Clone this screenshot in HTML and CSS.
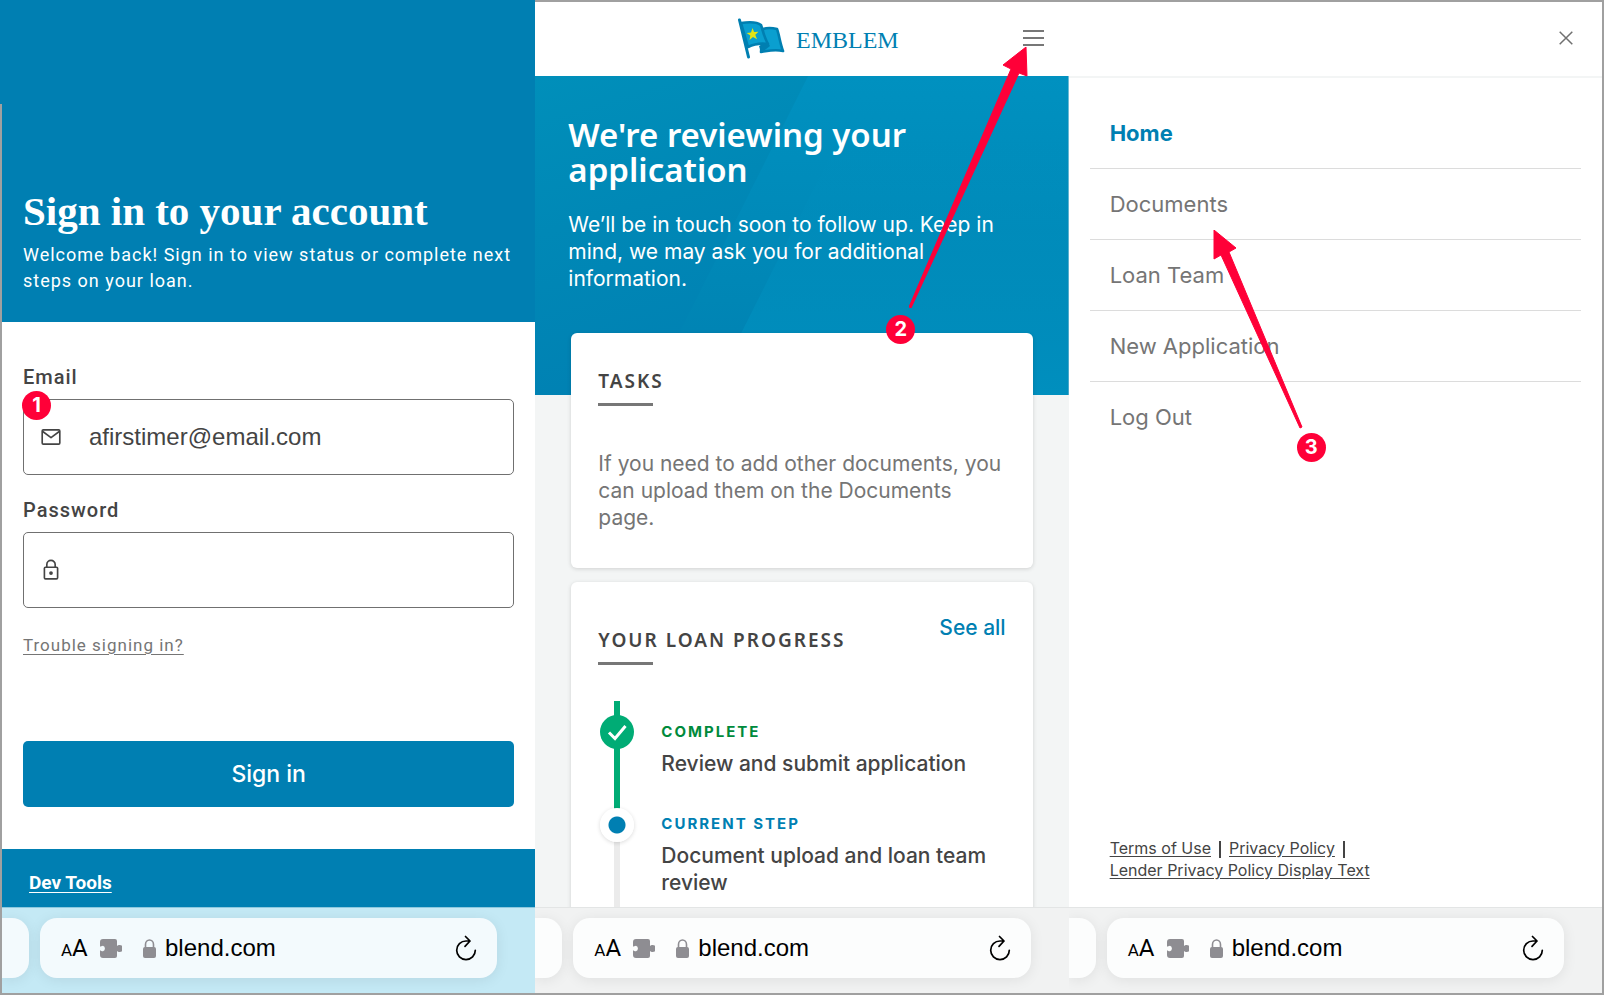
FILE: index.html
```html
<!DOCTYPE html>
<html lang="en">
<head>
  <meta charset="utf-8">
  <title>Borrower sign in steps</title>
  <meta name="viewport" content="width=device-width, initial-scale=1.0">
  <link rel="stylesheet" href="styles.css">
</head>
<body>
  <!-- shared icons -->
  <svg class="sprite" aria-hidden="true">
    <symbol id="puzzle" viewBox="0 0 22 19">
      <path fill="#8e8d92" d="M3 0h12a2 2 0 0 1 2 2v5c1-.6 1.400-1 2.500-1a3 3 0 0 1 0 7c-1.100 0-1.500-.4-2.500-1v5a2 2 0 0 1-2 2H3a3 3 0 0 1-3-3v-4.500c1 0 1.500.8 3 .8a3 3 0 0 0 0-5.600C1.500 6.700 1 7.500 0 7.500V3a3 3 0 0 1 3-3z"/>
    </symbol>
    <symbol id="padlock" viewBox="0 0 13 19">
      <rect x="0" y="8" width="13" height="11" rx="2" fill="#8e8d92"/>
      <path d="M2.500 9V5.500a4 4.500 0 0 1 8 0V9" fill="none" stroke="#8e8d92" stroke-width="1.600"/>
    </symbol>
    <symbol id="reload" viewBox="0 0 22 26">
      <path d="M11 6a9.300 9.300 0 1 0 9.300 9.300M10.500 1.500L15 6l-5 5.300M11 6h4" fill="none" stroke="#000" stroke-width="1.700" stroke-linecap="round" stroke-linejoin="round"/>
    </symbol>
  </svg>

  <div class="steps">

    <!-- step 1: sign in -->
    <section class="screen signin">
      <header class="signin-hero">
        <h1>Sign in to your account</h1>
        <p>Welcome back! Sign in to view status or complete next steps on your loan.</p>
      </header>
      <form class="signin-form">
        <label for="email">Email</label>
        <div class="field">
          <svg class="field-icon" viewBox="0 0 20 20" fill="none" stroke="#444" stroke-width="1.500" stroke-linejoin="round"><rect x="2" y="3.500" width="16" height="13" rx="1"/><path d="M2.500 5l7.500 5.500L17.500 5"/></svg>
          <input type="email" id="email" value="afirstimer@email.com">
          <span class="badge badge-one">1</span>
        </div>
        <label for="password">Password</label>
        <div class="field">
          <svg class="field-icon" viewBox="0 0 20 20" fill="none" stroke="#444" stroke-width="1.500"><rect x="4" y="7.500" width="12" height="10.500" rx="1"/><path d="M6.200 7.500V5a3.800 3.800 0 0 1 7.600 0v2.500"/><circle cx="10" cy="12.800" r="1.700" fill="#444" stroke="none"/></svg>
          <input type="password" id="password">
        </div>
        <a class="trouble" href="#">Trouble signing in?</a>
        <button type="button" class="signin-button">Sign in</button>
      </form>
      <footer class="dev-footer"><a href="#">Dev Tools</a></footer>
      <div class="browser-bar browser-bar-blue">
        <div class="prev-tab"></div>
        <div class="address">
          <span class="text-size"><small>A</small>A</span>
          <svg class="puzzle"><use href="#puzzle"/></svg>
          <svg class="padlock"><use href="#padlock"/></svg>
          <input type="text" value="blend.com" aria-label="Address">
          <button type="button" aria-label="Reload"><svg class="reload"><use href="#reload"/></svg></button>
        </div>
      </div>
    </section>

    <!-- step 2: dashboard -->
    <section class="screen dashboard">
      <header class="topbar">
        <div class="logo">
          <svg class="flag" viewBox="0 0 47 41">
            <path d="M25 11c6-2 10-1 14 0 2 5 3 14 6 22-9-2-15 0-22 1z" fill="#0a9fd0" stroke="#007fb1" stroke-width="2.600" stroke-linejoin="round"/>
            <path d="M21 28l9-3 2 3-9 7z" fill="#007fb1"/>
            <path d="M3 5c7-1 15-2 20 2 2 6 3 12 7 19-7-1-14 0-20 3z" fill="#0a9fd0" stroke="#007fb1" stroke-width="2.600" stroke-linejoin="round"/>
            <path d="M1.500 2l9 37" stroke="#007fb1" stroke-width="3" stroke-linecap="round"/>
            <path d="M14.500 10l1.600 4 4.400-.2-3.200 3 1.700 4.400-4-2.200-3.500 3 .8-4.600-3.700-2.400 4.400-.6z" fill="#e4e413"/>
          </svg>
          <span>EMBLEM</span>
        </div>
        <button type="button" class="menu-button" aria-label="Menu"><i></i><i></i><i></i></button>
      </header>
      <main class="dashboard-body">
        <div class="review-hero">
          <svg class="hero-art" viewBox="0 0 533 319" preserveAspectRatio="none" aria-hidden="true">
            <defs>
              <linearGradient id="base" x1="0" y1="0" x2=".5" y2="1"><stop offset="0" stop-color="#008fba"/><stop offset=".4" stop-color="#0088b6"/><stop offset="1" stop-color="#007fb2"/></linearGradient>
              <linearGradient id="beam" x1="0" y1="0" x2="0" y2="1"><stop offset="0" stop-color="#0091c0"/><stop offset=".7" stop-color="#0086b5"/><stop offset="1" stop-color="#0080b2"/></linearGradient>
              <linearGradient id="glow" x1="0" y1="0" x2="0" y2="1"><stop offset="0" stop-color="#008fbe" stop-opacity="0"/><stop offset="1" stop-color="#008fbe"/></linearGradient>
            </defs>
            <path d="M0 0h533v319H0z" fill="url(#base)"/>
            <path d="M273 0h260v319H113z" fill="url(#beam)"/>
            <path d="M310 50h223v269H175z" fill="url(#glow)"/>
          </svg>
          <h2>We're reviewing your application</h2>
          <p>We’ll be in touch soon to follow up. Keep in mind, we may ask you for additional information.</p>
        </div>
        <div class="cards">
          <article class="card">
            <h3>TASKS</h3>
            <p>If you need to add other documents, you can upload them on the Documents page.</p>
          </article>
          <article class="card">
            <a class="see-all" href="#">See all</a>
            <h3>YOUR LOAN PROGRESS</h3>
            <ol class="timeline">
              <li class="done">
                <span class="marker"><svg viewBox="0 0 34 34"><path d="M9 17.500l6 6L25.500 11" fill="none" stroke="#fff" stroke-width="3"/></svg></span>
                <strong>COMPLETE</strong>
                <p>Review and submit application</p>
              </li>
              <li class="current">
                <span class="marker"></span>
                <strong>CURRENT STEP</strong>
                <p>Document upload and loan team review</p>
              </li>
            </ol>
          </article>
        </div>
      </main>
      <div class="browser-bar">
        <div class="prev-tab"></div>
        <div class="address">
          <span class="text-size"><small>A</small>A</span>
          <svg class="puzzle"><use href="#puzzle"/></svg>
          <svg class="padlock"><use href="#padlock"/></svg>
          <input type="text" value="blend.com" aria-label="Address">
          <button type="button" aria-label="Reload"><svg class="reload"><use href="#reload"/></svg></button>
        </div>
      </div>
      <!-- arrow to the menu button -->
      <svg class="arrow arrow-two" viewBox="0 0 119 261"><path d="M117 0L94 18l8 4L0 260l2 1L110 26l8 3z" fill="#ff0038" stroke="#ff0038" stroke-linejoin="round"/></svg>
      <span class="badge badge-two">2</span>
    </section>

    <!-- step 3: menu -->
    <section class="screen menu">
      <header class="topbar">
        <button type="button" class="close-button" aria-label="Close"><svg viewBox="0 0 14 14"><path d="M.7.7l12.600 12.600M13.300.7L.7 13.300" stroke="#707070" stroke-width="1.500"/></svg></button>
      </header>
      <nav class="menu-list">
        <a class="active" href="#">Home</a>
        <a href="#">Documents</a>
        <a href="#">Loan Team</a>
        <a href="#">New Application</a>
        <a href="#">Log Out</a>
      </nav>
      <footer class="legal">
        <a href="#">Terms of Use</a><i></i><a href="#">Privacy Policy</a><i></i><br>
        <a href="#">Lender Privacy Policy Display Text</a>
      </footer>
      <div class="browser-bar">
        <div class="prev-tab"></div>
        <div class="address">
          <span class="text-size"><small>A</small>A</span>
          <svg class="puzzle"><use href="#puzzle"/></svg>
          <svg class="padlock"><use href="#padlock"/></svg>
          <input type="text" value="blend.com" aria-label="Address">
          <button type="button" aria-label="Reload"><svg class="reload"><use href="#reload"/></svg></button>
        </div>
      </div>
      <!-- arrow to Documents -->
      <svg class="arrow arrow-three" viewBox="0 0 90 199"><path d="M1 0l22 18-7 4 73 175-2 1L8 25l-7 4z" fill="#ff0038" stroke="#ff0038" stroke-linejoin="round"/></svg>
      <span class="badge badge-three">3</span>
    </section>

  </div>
</body>
</html>
```

FILE: styles.css
```css
* {
  box-sizing: border-box;
}
body {
  margin: 0;
  font-family: Inter, "Open Sans", sans-serif;
  color: #444;
}
h1, h2, h3, p, ol {
  margin: 0;
  padding: 0;
}
button {
  padding: 0;
  border: none;
  background: none;
  cursor: pointer;
}
input {
  min-width: 0;
  border: none;
  outline: none;
  background: none;
  font-family: "Liberation Sans", Arial, sans-serif;
  font-size: 24px;
}
.sprite {
  position: absolute;
  width: 0;
  height: 0;
}
.steps {
  display: grid;
  grid-template-columns: repeat(3, minmax(0, 1fr));
  height: 100vh;
  border: 2px solid #a0a0a0;
}
.screen {
  position: relative;
  display: flex;
  flex-direction: column;
  min-height: 0;
  background: #fff;
}

/* sign in */
.signin {
  font-family: Roboto, sans-serif;
}
.signin-hero {
  position: relative;
  margin-top: -2px;
  padding: 186px 21px 28px;
  background: #007fb2;
  color: #fff;
}
.signin-hero::before {
  content: "";
  position: absolute;
  top: 0;
  left: -2px;
  width: 2px;
  height: 104px;
  background: #007fb2;
}
.signin-hero h1 {
  margin-bottom: 6px;
  font-family: "Liberation Serif", serif;
  font-size: 41px;
  line-height: 50px;
}
.signin-hero p {
  font-size: 18px;
  line-height: 26px;
  letter-spacing: 1px;
}
.signin-form {
  flex: 1;
  display: flex;
  flex-direction: column;
  padding: 43px 21px 0;
}
.signin-form label {
  margin-bottom: 10px;
  font-size: 20px;
  font-weight: 500;
  line-height: 24px;
  letter-spacing: 1px;
}
.field {
  position: relative;
  display: flex;
  align-items: center;
  gap: 27px;
  height: 76px;
  margin-bottom: 23px;
  padding: 0 16px;
  border: 1px solid #707070;
  border-radius: 5px;
}
.field-icon {
  flex: none;
  width: 22px;
  height: 22px;
}
.field input {
  flex: 1;
  padding: 0;
  color: #444;
}
.trouble {
  align-self: flex-start;
  margin-top: 2px;
  color: #757575;
  font-size: 17px;
  line-height: 24px;
  letter-spacing: 1px;
  text-underline-offset: 3px;
}
.signin-button {
  height: 66px;
  margin-top: 84px;
  border-radius: 5px;
  background: #007fb2;
  color: #fff;
  font-family: Inter, sans-serif;
  font-size: 23px;
  font-weight: 500;
}
.dev-footer {
  padding: 22px 27px 12px;
  background: #007fb2;
}
.dev-footer a {
  color: #fff;
  font-size: 19px;
  font-weight: bold;
  line-height: 24px;
  text-underline-offset: 3px;
}

/* browser bar */
.browser-bar {
  position: relative;
  flex: none;
  display: flex;
  gap: 11px;
  height: 86px;
  padding: 10px 38px 15px 0;
  border-top: 1px solid #e3e5e5;
  background: #f1f2f2;
  overflow: hidden;
}
.browser-bar-blue {
  border-color: #8cc8de;
  background: #c4e9f5;
}
.prev-tab,
.address {
  border-radius: 17px;
  background: #fcfdfd;
  box-shadow: 0 2px 14px rgba(0, 0, 0, 0.08);
}
.browser-bar-blue > div {
  background: #f3fafd;
}
.prev-tab {
  flex: none;
  width: 27px;
  border-radius: 0 17px 17px 0;
}
.address {
  flex: 1;
  display: flex;
  align-items: center;
  min-width: 0;
  padding: 0 20px 0 21px;
}
.text-size {
  flex: none;
  width: 39px;
  color: #000;
  font-family: Roboto, sans-serif;
  font-size: 24px;
}
.text-size small {
  font-size: 17px;
}
.puzzle {
  flex: none;
  width: 22px;
  height: 19px;
  margin-right: 21px;
}
.padlock {
  flex: none;
  width: 13px;
  height: 19px;
  margin-right: 9px;
}
.reload {
  display: block;
  width: 22px;
  height: 26px;
}
.address input {
  flex: 1;
  padding: 0;
  color: #000;
}

/* dashboard */
.topbar {
  flex: none;
  display: flex;
  align-items: center;
  justify-content: flex-end;
  height: 74px;
  padding: 0 25px 2px;
}
.logo {
  display: flex;
  align-items: center;
  gap: 11px;
  margin-right: 124px;
  color: #007fb2;
  font-family: "Liberation Serif", serif;
  font-size: 24px;
}
.flag {
  width: 47px;
  height: 41px;
}
.logo span {
  padding-top: 5px;
}
.menu-button {
  display: flex;
  flex-direction: column;
  gap: 5px;
  width: 21px;
}
.menu-button i {
  height: 2px;
  background: #777;
}
.dashboard-body {
  flex: 1;
  min-height: 0;
  overflow: hidden;
  background: #f3f5f5;
}
.review-hero {
  position: relative;
  height: 319px;
  padding: 41px 33px 0;
  color: #fff;
}
.hero-art {
  position: absolute;
  top: 0;
  left: 0;
  width: 100%;
  height: 100%;
}
.review-hero h2,
.review-hero p {
  position: relative;
}
.review-hero h2 {
  max-width: 400px;
  margin-bottom: 24px;
  font-family: "Noto Sans", sans-serif;
  font-size: 33px;
  font-weight: 600;
  line-height: 35px;
}
.review-hero p {
  max-width: 440px;
  font-size: 21px;
  line-height: 27px;
}
.cards {
  position: relative;
  display: flex;
  flex-direction: column;
  gap: 14px;
  margin-top: -62px;
  padding: 0 36px;
}
.card {
  position: relative;
  padding: 34px 27px 37px;
  border-radius: 6px;
  background: #fff;
  box-shadow: 0 1px 4px rgba(0, 0, 0, 0.15);
}
.card h3 {
  font-family: "Noto Sans", sans-serif;
  font-size: 19px;
  font-weight: 600;
  line-height: 28px;
  letter-spacing: 2px;
}
.card h3::after {
  content: "";
  display: block;
  width: 55px;
  height: 3px;
  margin-top: 8px;
  background: #777;
}
.card > p {
  margin-top: 44px;
  color: #757575;
  font-size: 21px;
  line-height: 27px;
}
.card:nth-child(2) {
  padding-top: 44px;
}
.see-all {
  position: absolute;
  top: 34px;
  right: 27px;
  color: #007fb2;
  font-size: 21px;
  font-weight: 500;
  line-height: 24px;
  text-decoration: none;
}
.timeline {
  margin-top: 36px;
  list-style: none;
}
.timeline li {
  position: relative;
  min-height: 95px;
  padding-left: 63px;
}
.timeline li::before {
  content: "";
  position: absolute;
  top: 0;
  left: 16px;
  width: 6px;
  height: 100%;
  background: #00ac75;
}
.timeline .done {
  padding-top: 16px;
}
.timeline .done::before {
  height: 110px;
}
.timeline .current {
  margin-top: 13px;
  min-height: 130px;
}
.timeline .current::before {
  background: #ebebeb;
}
.marker {
  position: absolute;
  left: 2px;
  width: 34px;
  height: 34px;
  border-radius: 50%;
  background: #00ac75;
}
.done .marker {
  top: 14px;
}
.current .marker {
  top: -1px;
  background: radial-gradient(circle, #007fb2 8px, #fff 9px);
  box-shadow: 0 1px 4px rgba(0, 0, 0, 0.15);
}
.timeline strong {
  display: block;
  margin-bottom: 3px;
  color: #008a3c;
  font-size: 15px;
  line-height: 30px;
  letter-spacing: 2px;
}
.timeline .current strong {
  color: #007fb2;
}
.timeline p {
  font-size: 21px;
  font-weight: 500;
  line-height: 27px;
}

/* menu */
.menu .topbar {
  height: 76px;
  padding-right: 29px;
  border-bottom: 2px solid #f3f5f5;
}
.close-button svg {
  display: block;
  width: 14px;
  height: 14px;
}
.menu-list {
  flex: 1;
  padding: 20px 21px 0;
}
.menu-list a {
  display: block;
  padding: 21px 20px 20px;
  border-bottom: 1px solid #dcdcdc;
  color: #757575;
  font-size: 22px;
  line-height: 29px;
  text-decoration: none;
}
.menu-list a:last-child {
  border-bottom: none;
}
.menu-list .active {
  color: #007fb2;
  font-weight: bold;
}
.legal {
  padding: 0 41px 26px;
  font-size: 16px;
  line-height: 22px;
}
.legal a {
  color: #444;
  text-underline-offset: 2px;
}
.legal i {
  display: inline-block;
  width: 2px;
  height: 17px;
  margin: 0 8px;
  background: #444;
  vertical-align: middle;
}

/* numbered callouts */
.badge {
  position: absolute;
  width: 29px;
  height: 29px;
  border-radius: 50%;
  background: #ff0038;
  color: #fff;
  font-family: Inter, sans-serif;
  font-size: 20px;
  font-weight: bold;
  line-height: 29px;
  text-align: center;
}
.badge-one {
  top: -9px;
  left: -2px;
}
.badge-two {
  top: 313px;
  left: 351px;
}
.badge-three {
  top: 431px;
  left: 228px;
}
.arrow {
  position: absolute;
}
.arrow-two {
  top: 45px;
  left: 374px;
  width: 119px;
  height: 261px;
}
.arrow-three {
  top: 228px;
  left: 144px;
  width: 90px;
  height: 199px;
}
```
